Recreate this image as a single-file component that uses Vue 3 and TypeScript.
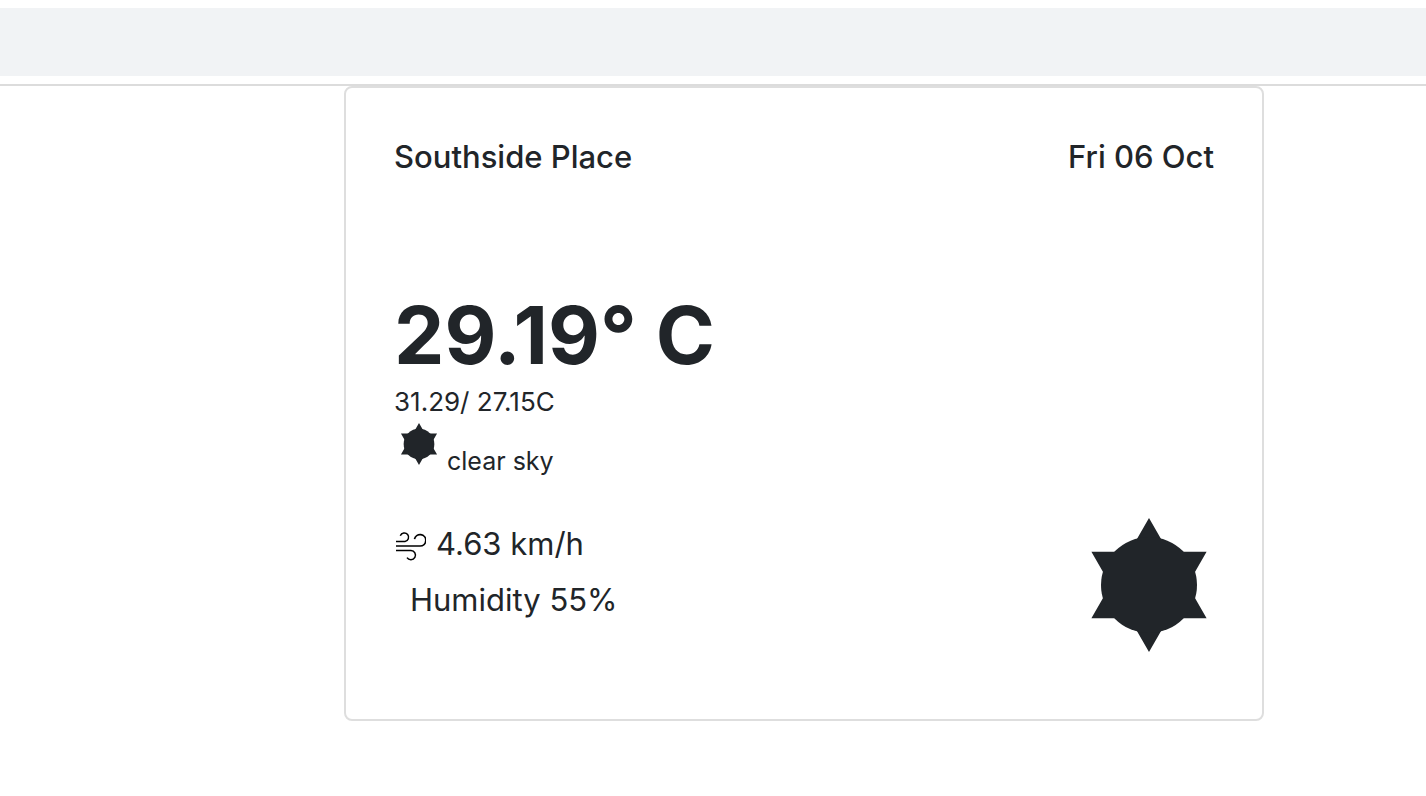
<script setup lang="ts">
interface Weather {
  city: string
  date: string
  temperature: string
  high: string
  low: string
  sky: string
  wind: string
  humidity: string
}

const weather: Weather = {
  city: 'Southside Place',
  date: 'Fri 06 Oct',
  temperature: '29.19',
  high: '31.29',
  low: '27.15',
  sky: 'clear sky',
  wind: '4.63 km/h',
  humidity: '55%',
}
</script>

<template>
  <div class="page">
    <header class="topbar">
      <div class="topbar-fill"></div>
    </header>
    <main class="content">
      <article class="card">
        <div class="heading">
          <h2>{{ weather.city }}</h2>
          <h2>{{ weather.date }}</h2>
        </div>
        <div class="current">
          <p class="temperature">{{ weather.temperature }}° C</p>
          <p class="range">{{ weather.high }}/ {{ weather.low }}C</p>
          <p class="sky">
            <svg class="sun-small" viewBox="0 0 134 134" aria-hidden="true">
              <path d="M67 0 124.600 100.250H9.400ZM67 134 9.400 33.750H124.600Z" />
              <circle cx="67" cy="67" r="49" />
            </svg>
            <span>{{ weather.sky }}</span>
          </p>
        </div>
        <div class="details">
          <div class="stats">
            <p class="wind">
              <svg class="wind-icon" viewBox="0 0 32 30" aria-hidden="true">
                <path d="M2 10.500H11A4.300 4.300 0 1 0 6.300 4.700M2 19.500H17A4.600 4.600 0 1 1 13 26.600" />
                <path class="gust" d="M2 15H26A5.700 5.700 0 1 0 20.500 8.200" />
              </svg>
              <span>{{ weather.wind }}</span>
            </p>
            <p class="humidity">Humidity {{ weather.humidity }}</p>
          </div>
          <svg class="sun-large" viewBox="2 0 130 134" aria-hidden="true">
            <path d="M67 0 124.600 100.250H9.400ZM67 134 9.400 33.750H124.600Z" />
            <circle cx="67" cy="67" r="48" />
          </svg>
        </div>
      </article>
    </main>
  </div>
</template>

<style>
body {
  margin: 0;
  background: #fff;
}
</style>

<style scoped>
.page {
  color: #212529;
  font-family: Inter, "Liberation Sans", sans-serif;
  font-size: 31px;
  line-height: 40px;
}

h2,
p {
  margin: 0;
}

.topbar {
  padding: 8px 0;
  border-bottom: 2px solid #dcdcdc;
}

.topbar-fill {
  height: 68px;
  background: #f1f3f5;
}

.content {
  display: grid;
  grid-template-columns: 344fr 920fr 162fr;
}

.card {
  grid-column: 2;
  padding: 48px 48px 67px;
  border: 2px solid #dedede;
  border-radius: 8px;
}

.heading {
  display: flex;
  justify-content: space-between;
}

.heading h2 {
  font-size: 31px;
  font-weight: 500;
  line-height: 42px;
}

.current {
  margin-top: 109px;
}

.temperature {
  font-size: 80px;
  font-weight: 700;
  line-height: 96px;
}

.range {
  font-size: 26px;
  line-height: 38px;
}

.sky {
  display: flex;
  align-items: flex-end;
  gap: 7px;
  margin-top: 2px;
  font-size: 25px;
  line-height: 30px;
}

.sun-small {
  width: 42px;
  height: 42px;
  margin: 0 0 11px 4px;
  fill: currentColor;
}

.details {
  display: flex;
  align-items: flex-start;
  justify-content: space-between;
  margin-top: 42px;
}

.stats {
  display: grid;
  gap: 16px;
  padding-top: 6px;
}

.wind {
  display: flex;
  align-items: center;
  gap: 10px;
}

.wind-icon {
  width: 32px;
  height: 30px;
  margin-top: 4px;
  fill: none;
  stroke: #000;
  stroke-width: 1.5;
  stroke-linecap: butt;
}

.gust {
  stroke-width: 1.7;
}

.humidity {
  padding-left: 16px;
}

.sun-large {
  width: 130px;
  height: 134px;
  fill: currentColor;
}
</style>
